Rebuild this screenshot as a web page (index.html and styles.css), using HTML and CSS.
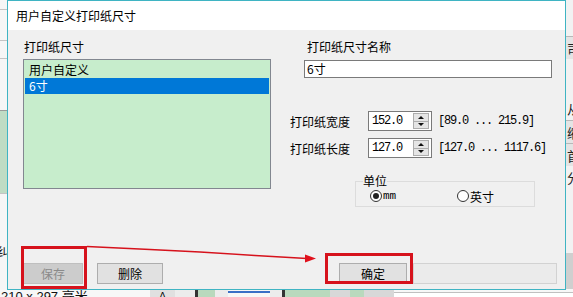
FILE: index.html
```html
<!DOCTYPE html>
<html lang="zh">
<head>
<meta charset="utf-8">
<title>用户自定义打印纸尺寸</title>
<link rel="stylesheet" href="styles.css">
</head>
<body>
<div class="desktop">
  <div class="app-left">
    <div class="al-row" style="height:9px"></div>
    <div class="al-row line" style="height:31px"></div>
    <div class="al-row line" style="height:18px"></div>
    <div class="al-row line" style="height:52px"></div>
    <div class="al-row green" style="height:83px"></div>
    <div class="al-row line" style="height:50px"></div>
    <div class="al-row char">纠</div>
  </div>
  <div class="app-right">
    <div class="ar-cell" style="height:36px"></div>
    <div class="ar-cell box">司</div>
    <div class="ar-cell" style="height:38px"></div>
    <div class="ar-cell">从</div>
    <div class="ar-cell box">缩</div>
    <div class="ar-cell box">首</div>
    <div class="ar-cell">分</div>
    <div class="ar-cell" style="height:64px"></div>
    <div class="ar-cell dark" style="height:40px"></div>
  </div>
  <div class="app-bottom">
    <span class="ab-text">210 x 297 毫米</span>
    <span class="ab-up">^</span>
    <span class="ab-gap" style="width:20px"></span>
    <span class="ab-dark"></span>
    <span class="ab-green" style="width:17px"></span>
    <span class="ab-gap" style="width:13px"></span>
    <span class="ab-blue"></span>
    <span class="ab-gap" style="width:12px"></span>
    <span class="ab-dark"></span>
    <span class="ab-green" style="width:45px"></span>
    <span class="ab-gray" style="width:20px"></span>
    <span class="ab-green" style="width:14px"></span>
    <span class="ab-gray" style="width:30px"></span>
    <span class="ab-white"></span>
  </div>

  <div class="dialog">
    <div class="titlebar">用户自定义打印纸尺寸</div>
    <div class="client">
      <div class="top">
        <div class="col-left">
          <div class="label">打印纸尺寸</div>
          <div class="listbox">
            <div class="item">用户自定义</div>
            <div class="item sel">6寸</div>
          </div>
        </div>
        <div class="col-right">
          <div class="label name-label">打印纸尺寸名称</div>
          <div class="textbox">6寸</div>
          <div class="spinrow first">
            <span class="spin-label">打印纸宽度</span>
            <div class="spinbox">
              <span class="spin-val">152.0</span>
              <span class="spin-btns"><i class="up"></i><i class="down"></i></span>
            </div>
            <span class="range">[89.0 ... 215.9]</span>
          </div>
          <div class="spinrow">
            <span class="spin-label">打印纸长度</span>
            <div class="spinbox">
              <span class="spin-val">127.0</span>
              <span class="spin-btns"><i class="up"></i><i class="down"></i></span>
            </div>
            <span class="range">[127.0 ... 1117.6]</span>
          </div>
          <fieldset class="unit">
            <legend>单位</legend>
            <label class="radio first"><span class="dot on"></span><span class="mm">mm</span></label>
            <label class="radio"><span class="dot"></span>英寸</label>
          </fieldset>
        </div>
      </div>
      <div class="buttons">
        <div class="btn save">保存</div>
        <div class="btn del">删除</div>
        <div class="btn ok">确定</div>
        <div class="btn blank"></div>
      </div>
    </div>
  </div>

  <svg class="annot" width="573" height="297" viewBox="0 0 573 297">
    <rect x="22.5" y="247.5" width="63" height="40" fill="none" stroke="#d6121c" stroke-width="3"/>
    <rect x="326.5" y="254.5" width="85" height="28" fill="none" stroke="#d6121c" stroke-width="3"/>
    <polyline points="87,246.5 150,249.5 200,252 255,255.5 307,258.5" fill="none" stroke="#d6121c" stroke-width="1.3"/>
    <polygon points="305,254.5 316,258.5 305,262.5" fill="#e0101c"/>
  </svg>
</div>
</body>
</html>
```

FILE: styles.css
```css
html, body {
  margin: 0;
  padding: 0;
}

.desktop {
  position: relative;
  width: 573px;
  height: 297px;
  overflow: hidden;
  background: #f3f3f3;
  font-family: "Noto Sans CJK SC", sans-serif;
  font-size: 12px;
}

/* background application (behind the dialog) */
.app-left {
  position: absolute;
  left: 0;
  top: 0;
  width: 7px;
  height: 297px;
  display: flex;
  flex-direction: column;
  background: #f6f6f6;
  overflow: hidden;
}
.al-row { flex: none; }
.al-row.line { border-top: 1px solid #c4c4c4; box-sizing: border-box; }
.al-row.green { background: #bfdcc4; border-top: 1px solid #9a9a9a; box-sizing: border-box; }
.al-row.char { font-size: 13px; line-height: 16px; margin-left: -3px; color: #222; }

.app-right {
  position: absolute;
  left: 566px;
  top: 0;
  width: 7px;
  height: 297px;
  display: flex;
  flex-direction: column;
  background: #f2f2f2;
  overflow: hidden;
}
.ar-cell {
  flex: none;
  height: 23px;
  line-height: 23px;
  font-size: 13px;
  color: #222;
  padding-left: 1px;
  white-space: nowrap;
}
.ar-cell.box { background: #e4e4e4; border-top: 1px solid #b8b8b8; box-sizing: border-box; }
.ar-cell.dark { background: #cfcfcf; }

.app-bottom {
  position: absolute;
  left: 0;
  top: 289px;
  width: 573px;
  height: 8px;
  display: flex;
  background: #f7f7f7;
  overflow: hidden;
}
.app-bottom > span { flex: none; height: 8px; }
.ab-text {
  width: 150px;
  font-family: "Liberation Sans", "Noto Sans CJK SC", sans-serif;
  font-size: 13px;
  line-height: 16px;
  padding-left: 1px;
  box-sizing: border-box;
  color: #111;
}
.ab-up { width: 25px; background: #e0e0e0; text-align: center; font-size: 12px; line-height: 14px; }
.ab-dark { width: 3px; background: #333; }
.ab-green { background: #b9d9bd; }
.ab-gray { background: #d8d8d8; }
.ab-blue { width: 42px; border-top: 2px solid #3a6fc6; margin-top: 2px; box-sizing: border-box; background: #f7f7f7; }
.ab-gap { background: #ececec; }
.ab-white { flex: 1 !important; background: #fff; border-top: 1px solid #c0c0c0; margin-top: 3px; }

/* dialog */
.dialog {
  position: absolute;
  left: 7px;
  top: 0;
  width: 559px;
  height: 290px;
  box-sizing: border-box;
  border: 1px solid #3fb4c3;
  background: #f0f0f0;
  display: flex;
  flex-direction: column;
  color: #000;
}

.titlebar {
  height: 29px;
  line-height: 29px;
  background: #fff;
  padding-left: 8px;
  white-space: nowrap;
}

.client {
  flex: 1;
  display: flex;
  flex-direction: column;
  padding: 10px 0 5px 15px;
}

.top {
  display: flex;
  align-items: flex-start;
}

.col-left { width: 248px; }

.label {
  height: 14px;
  line-height: 14px;
  padding-left: 1px;
  white-space: nowrap;
}

.listbox {
  margin-top: 5px;
  height: 130px;
  box-sizing: border-box;
  border: 1px solid #828790;
  background: #c7edcc;
  padding: 2px 1px;
}

.item {
  height: 16px;
  line-height: 16px;
  padding-left: 4px;
  white-space: nowrap;
}
.item.sel {
  background: #0078d7;
  color: #fff;
}

.col-right {
  margin-left: 19px;
  width: 262px;
  display: flex;
  flex-direction: column;
  align-items: flex-start;
}

.name-label { padding-left: 17px; }

.textbox {
  margin: 6px 0 0 14px;
  width: 248px;
  height: 18px;
  box-sizing: border-box;
  border: 1px solid #7a7a7a;
  background: #fff;
  padding-left: 2px;
  line-height: 16px;
}

.spinrow {
  display: flex;
  align-items: center;
  height: 20px;
  margin-top: 7px;
  white-space: nowrap;
}
.spinrow.first { margin-top: 33px; }

.spin-label { width: 78px; }

.spinbox {
  width: 64px;
  height: 20px;
  box-sizing: border-box;
  border: 1px solid #7a7a7a;
  background: #fff;
  display: flex;
  align-items: stretch;
}

.spin-val,
.range {
  font-family: "Liberation Mono", "DejaVu Sans Mono", monospace;
  font-size: 12px;
  letter-spacing: -1.2px;
  line-height: 18px;
}
.spin-val { flex: 1; padding-left: 3px; }
.range { margin-left: 6px; }

.spin-btns {
  width: 16px;
  margin: 1px 2px 1px 0;
  box-sizing: border-box;
  border: 1px solid #adadad;
  background: #e5e5e5;
  display: flex;
  flex-direction: column;
}
.spin-btns i {
  flex: 1;
  display: flex;
  align-items: center;
  justify-content: center;
}
.spin-btns i.up { border-bottom: 1px solid #adadad; }
.spin-btns i::after {
  content: "";
  width: 0;
  height: 0;
  border-left: 3px solid transparent;
  border-right: 3px solid transparent;
}
.spin-btns i.up::after { border-bottom: 3px solid #111; }
.spin-btns i.down::after { border-top: 3px solid #111; }

.unit {
  margin: 16px 0 0 65px;
  width: 180px;
  box-sizing: border-box;
  border: 1px solid #dcdcdc;
  padding: 1px 0 3px 7px;
  display: flex;
  min-width: 0;
}
.unit legend {
  padding: 0;
  line-height: 14px;
  font-size: 12px;
}

.radio {
  display: flex;
  align-items: center;
  height: 14px;
  white-space: nowrap;
}
.radio.first {
  margin-left: 7px;
  width: 87px;
}
.dot {
  width: 12px;
  height: 12px;
  box-sizing: border-box;
  border: 1px solid #333;
  border-radius: 50%;
  background: #fff;
  margin-right: 1px;
  display: flex;
  align-items: center;
  justify-content: center;
}
.dot.on::after {
  content: "";
  width: 6px;
  height: 6px;
  border-radius: 50%;
  background: #222;
}
.mm {
  font-family: "Liberation Mono", "DejaVu Sans Mono", monospace;
  font-size: 11px;
}

.buttons {
  margin-top: auto;
  display: flex;
  height: 21px;
}
.btn {
  flex: none;
  height: 21px;
  box-sizing: border-box;
  border: 1px solid #adadad;
  background: #e1e1e1;
  display: flex;
  align-items: center;
  justify-content: center;
  line-height: 14px;
}
.btn.save {
  width: 60px;
  background: #cccccc;
  border-color: #bfbfbf;
  color: #8a8a8a;
}
.btn.del { width: 66px; margin-left: 14px; }
.btn.ok { width: 68px; margin-left: 176px; }
.btn.blank {
  width: 144px;
  margin-left: 6px;
  background: #ebebeb;
  border-color: #d2d2d2;
}

.annot {
  position: absolute;
  left: 0;
  top: 0;
  pointer-events: none;
}
```
